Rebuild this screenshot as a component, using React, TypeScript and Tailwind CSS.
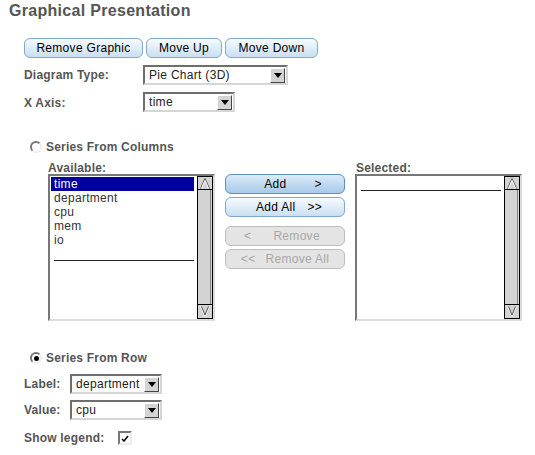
import React from "react";

function Btn({ label, w, variant = "normal" }: { label: React.ReactNode; w: string; variant?: "normal" | "active" | "disabled" }) {
  const styles = {
    normal: "border-[#7ea8cf] bg-gradient-to-b from-[#f7fbfe] to-[#c9dff2] text-black",
    active: "border-[#5f8fbd] bg-gradient-to-b from-[#dcebf8] to-[#a8c9e8] text-black",
    disabled: "border-[#bdbdbd] bg-[#e4e4e4] text-[#a8a8a8]",
  }[variant];
  return (
    <div className={`${w} h-[20px] rounded-[6px] border flex items-center justify-center text-[12px] tracking-[0.3px] ${styles}`}>
      {label}
    </div>
  );
}

function Select({ value, w }: { value: string; w: string }) {
  return (
    <div className={`${w} h-[20px] flex items-center bg-white border-2 border-t-[#6e6e6e] border-l-[#6e6e6e] border-b-[#d6d6d6] border-r-[#d6d6d6]`}>
      <span className="flex-1 pl-[4px] text-[12px] text-[#222] tracking-[0.3px] leading-none">{value}</span>
      <div className="w-[15px] h-[15px] mr-[1px] bg-[#d4d4d4] border border-t-white border-l-white border-b-[#444] border-r-[#444] flex items-center justify-center">
        <svg width="8" height="5" viewBox="0 0 8 5">
          <path d="M0 0 H8 L4 5 Z" fill="#000" />
        </svg>
      </div>
    </div>
  );
}

function ScrollBar() {
  return (
    <svg width="16" height="143" viewBox="0 0 16 143" className="shrink-0">
      <rect x="0.5" y="0.5" width="15" height="142" fill="#d3d3d3" stroke="#000" />
      <path d="M3.5 12.5 L8 2.5 L12.5 12.5" fill="none" stroke="#555" />
      <path d="M4.5 12.5 L8 4.5 L11.5 12.5" fill="none" stroke="#fff" />
      <line x1="1" y1="13.5" x2="15" y2="13.5" stroke="#000" />
      <line x1="1" y1="128.5" x2="15" y2="128.5" stroke="#000" />
      <path d="M3.5 130.5 L8 140.5 L12.5 130.5" fill="none" stroke="#fff" />
      <path d="M4.5 130.5 L8 139 L11.5 130.5" fill="none" stroke="#555" />
      <line x1="13.5" y1="14" x2="13.5" y2="128" stroke="#888" />
    </svg>
  );
}

function ListBox({ items, selected }: { items: string[]; selected?: number }) {
  return (
    <div className="w-[167px] h-[147px] flex bg-white border-2 border-t-[#777] border-l-[#777] border-b-[#dcdcdc] border-r-[#dcdcdc]">
      <div className="flex-1 pt-[1px] pl-[1px] pr-[3px]">
        {items.map((it, i) => (
          <div
            key={i}
            className={`h-[14px] pl-[3px] text-[12px] leading-[14px] tracking-[0.3px] ${
              i === selected ? "bg-[#0000a0] text-white" : "text-[#333]"
            }`}
          >
            {it}
          </div>
        ))}
        <div className="mt-[13px] ml-[3px] h-px w-[140px] bg-[#222]" />
      </div>
      <ScrollBar />
    </div>
  );
}

function Radio({ checked }: { checked?: boolean }) {
  return (
    <div className="w-[12px] h-[12px] rounded-full border-2 border-t-[#777] border-l-[#777] border-b-[#eee] border-r-[#eee] bg-white flex items-center justify-center">
      {checked && <div className="w-[5px] h-[5px] rounded-full bg-black" />}
    </div>
  );
}

export default function App() {
  const label = "text-[12px] font-bold text-[#555] tracking-[0.2px]";
  return (
    <div className="w-[535px] h-[455px] bg-white font-['Liberation_Sans',Arial,sans-serif] relative">
      <h1 className="pl-[9px] pt-[1px] text-[16px] font-bold text-[#555] tracking-[0.3px] leading-[20px]">
        Graphical Presentation
      </h1>

      <div className="pl-[24px] mt-[17px] flex gap-[3px]">
        <Btn label="Remove Graphic" w="w-[119px]" />
        <Btn label="Move Up" w="w-[76px]" />
        <Btn label="Move Down" w="w-[93px]" />
      </div>

      <div className="pl-[24px] mt-[7px] flex items-start">
        <span className={`${label} w-[119px] pt-[1px]`}>Diagram Type:</span>
        <Select value="Pie Chart (3D)" w="w-[145px]" />
      </div>
      <div className="pl-[24px] mt-[7px] flex items-start">
        <span className={`${label} w-[119px] pt-[2px]`}>X Axis:</span>
        <Select value="time" w="w-[92px]" />
      </div>

      <div className="pl-[30px] mt-[26px] flex items-center gap-[4px]">
        <Radio />
        <span className={label}>Series From Columns</span>
      </div>

      <div className="pl-[48px] mt-[6px] flex gap-[10px]">
        <div className="flex flex-col">
          <span className={`${label} leading-[12px]`}>Available:</span>
          <ListBox items={["time", "department", "cpu", "mem", "io"]} selected={0} />
        </div>
        <div className="pt-[12px] flex flex-col">
          <div className="flex flex-col gap-[3px]">
            <Btn w="w-[120px]" variant="active" label={<span className="flex w-full justify-center gap-[28px] pl-[16px]"><span>Add</span><span>&gt;</span></span>} />
            <Btn w="w-[120px]" label={<span className="flex gap-[12px] pl-[8px]"><span>Add All</span><span>&gt;&gt;</span></span>} />
          </div>
          <div className="mt-[9px] flex flex-col gap-[3px]">
            <Btn w="w-[120px]" variant="disabled" label={<span className="flex gap-[22px] pr-[6px]"><span>&lt;</span><span>Remove</span></span>} />
            <Btn w="w-[120px]" variant="disabled" label={<span className="flex gap-[10px]"><span>&lt;&lt;</span><span>Remove All</span></span>} />
          </div>
        </div>
        <div className="flex flex-col">
          <span className={`${label} leading-[12px] pl-[1px]`}>Selected:</span>
          <ListBox items={[]} />
        </div>
      </div>

      <div className="pl-[30px] mt-[28px] flex items-center gap-[4px]">
        <Radio checked />
        <span className={label}>Series From Row</span>
      </div>

      <div className="pl-[24px] mt-[7px] flex items-start">
        <span className={`${label} w-[46px] pt-[1px]`}>Label:</span>
        <Select value="department" w="w-[92px]" />
      </div>
      <div className="pl-[24px] mt-[6px] flex items-start">
        <span className={`${label} w-[46px] pt-[1px]`}>Value:</span>
        <Select value="cpu" w="w-[92px]" />
      </div>

      <div className="pl-[24px] mt-[9px] flex items-center">
        <span className={`${label} w-[94px]`}>Show legend:</span>
        <div className="w-[14px] h-[14px] border-2 border-t-[#777] border-l-[#777] border-b-[#eee] border-r-[#eee] bg-white flex items-center justify-center">
          <svg width="8" height="7" viewBox="0 0 8 7">
            <path d="M1 4 L3 6 L7 1" fill="none" stroke="#000" strokeWidth="1.5" />
          </svg>
        </div>
      </div>
    </div>
  );
}
